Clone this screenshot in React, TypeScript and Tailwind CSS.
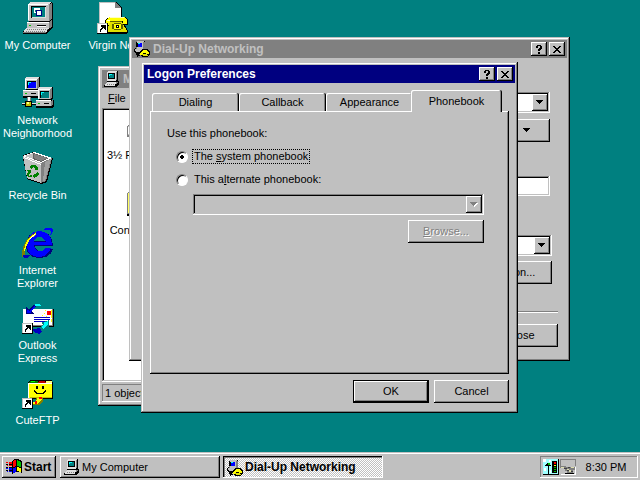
import React, { useState } from 'react';

const raisedWindow =
  'bg-[#c0c0c0] shadow-[inset_-1px_-1px_#000,inset_1px_1px_#c0c0c0,inset_-2px_-2px_#808080,inset_2px_2px_#fff]';
const raised = 'bg-[#c0c0c0] shadow-[inset_-1px_-1px_#000,inset_1px_1px_#fff,inset_-2px_-2px_#808080]';
const sunken = 'shadow-[inset_-1px_-1px_#fff,inset_1px_1px_#808080,inset_-2px_-2px_#c0c0c0,inset_2px_2px_#000]';
const thinSunken = 'shadow-[inset_-1px_-1px_#fff,inset_1px_1px_#808080]';
const boldFont = 'text-[12px] font-bold';

/* ---------- Icons ---------- */

type IconProps = { size?: 16 | 32; children: React.ReactNode };

const Pixels: React.FC<IconProps> = ({ size = 32, children }) => (
  <svg
    width={size}
    height={size}
    viewBox={`0 0 ${size} ${size}`}
    shapeRendering="crispEdges"
    className="shrink-0"
    aria-hidden="true"
  >
    {children}
  </svg>
);

const ShortcutArrow = () => (
  <>
    <path d="M0 21h11v11H0z" fill="#000" />
    <path d="M0 21h10v10H0z" fill="#c0c0c0" />
    <path d="M1 22h9v9H1z" fill="#fff" />
    <path d="M4 23h5v5h-1v-1h-1v-1h-1v1h-1v1h-1v2h-1v-3h1v-1h1v-1h-1v-1h-1z" fill="#000" />
  </>
);

const MyComputerIcon = () => (
  <Pixels>
    <path d="M8 0h22v1h1v17l-2 2H7l-1-1V2z" fill="#000" />
    <path d="M8 0h21v1l-3 1H6z" fill="#dfdfdf" />
    <path d="M27 2l3-1v16l-3 2z" fill="#808080" />
    <path d="M6 2h21v17H6z" fill="#c0c0c0" />
    <path d="M6 2h20v1H7v15H6z" fill="#fff" />
    <path d="M9 4h15v12H9z" fill="#000" />
    <path d="M10 5h14v11H10z" fill="#dfdfdf" />
    <path d="M10 5h13v10H10z" fill="#008080" />
    <path d="M12 6h6v5h-6z" fill="#fff" />
    <path d="M13 8h4v2h-4z" fill="#008080" />
    <path d="M14 8h6v6h-6z" fill="#000080" />
    <path d="M15 9h4v4h-4z" fill="#fff" />
    <path d="M5 20h23l3-2v7l-3 3H5z" fill="#000" />
    <path d="M5 20h22v7H5z" fill="#c0c0c0" />
    <path d="M5 20h22v1H5z" fill="#fff" />
    <path d="M27 20l3-2v6l-3 3z" fill="#808080" />
    <path d="M7 23h2v1H7z" fill="#00c000" />
    <path d="M15 23h9v1h-9z" fill="#000" />
    <path d="M15 24h9v1h-9z" fill="#fff" />
    <path d="M4 26h24v2l-3 4H1v-2z" fill="#000" />
    <path d="M4 26h23l-3 5H1z" fill="#dfdfdf" />
    <path
      d="M5 27h1m1 0h1m1 0h1m1 0h1m1 0h1m1 0h1m1 0h1m1 0h1m1 0h1m1 0h1m1 0h1M4 29h1m1 0h1m1 0h1m1 0h1m1 0h1m1 0h1m1 0h1m1 0h1m1 0h1m1 0h1"
      transform="translate(0 .5)"
      stroke="#808080"
    />
    <path d="M1 30h23v1H1z" fill="#808080" />
  </Pixels>
);

const Terminal = ({ x, y, screen }: { x: number; y: number; screen: string }) => (
  <g transform={`translate(${x} ${y})`}>
    <path d="M3 0h14v12l-2 1h2l1-1v7l-2 2H0v-8h3l-1-1V2z" fill="#000" />
    <path d="M3 0h13l-2 2H2z" fill="#dfdfdf" />
    <path d="M14 2l2-2v11l-2 1z" fill="#808080" />
    <path d="M2 2h12v10H2z" fill="#c0c0c0" />
    <path d="M2 2h12v1H3v9H2z" fill="#fff" />
    <path d="M4 4h9v7H4z" fill="#000" />
    <path d="M5 5h8v6H5z" fill={screen} />
    <path d="M5 5h3v1H6v2H5z" fill="#00ffff" />
    <path d="M0 13h15v6H0z" fill="#c0c0c0" />
    <path d="M0 13h15v1H0z" fill="#fff" />
    <path d="M15 14l2-2v5l-2 2z" fill="#808080" />
    <path d="M2 16h2v1H2z" fill="#00c000" />
    <path d="M8 16h5v1H8z" fill="#000" />
  </g>
);

const NetworkIcon = () => (
  <Pixels>
    <Terminal x={1} y={0} screen="#0000ff" />
    <path d="M5 20h4v5H5z" fill="#808080" />
    <path d="M6 20h2v5H6z" fill="#fff" />
    <path d="M0 26h4v1H0zM10 26h5v1h-5z" fill="#dfdfdf" />
    <path d="M0 27h15v1H0z" fill="#000" />
    <path d="M3 24h7v6H3z" fill="#000" />
    <path d="M4 25h5v4H4z" fill="#c0c000" />
    <path d="M5 25h2v2H5z" fill="#ffff80" />
    <Terminal x={14} y={10} screen="#008080" />
  </Pixels>
);

const RecycleIcon = () => (
  <Pixels>
    <path d="M1 3l11-3 19 6-6 24-6 2L5 27 1 6z" fill="#000" />
    <path d="M1 4l18 7v20L5 26z" fill="#c0c0c0" />
    <path d="M19 11l11-5-6 23-5 2z" fill="#808080" />
    <path d="M23 10l6-3-6 22h-2z" fill="#a0a0a0" />
    <path d="M1 4l11-4 18 6-11 5z" fill="#fff" />
    <path d="M3 4l8-3 16 5-8 4z" fill="#606060" />
    <path d="M11 1v6l8 3L3 4z" fill="#c0c0c0" />
    <path d="M12 2l14 4-7 3-7-3z" fill="#808080" />
    <path d="M2 5l17 7v1L2 6z" fill="#fff" />
    <path
      d="M9 13h4l2 2 1-1v4h-4l1-1-2-2-1 2-2-1zM5 18h4v4l-1-1-1 2 1 2H6l-1-3 1-2zM14 19l2 1 1 2-2 3h-2v1l-3-2 3-3v1h1l1-2zM8 23h2v2H8z"
      fill="#008000"
    />
  </Pixels>
);

const ExplorerIcon = () => (
  <Pixels>
    <path d="M22 2q7-3 9 1 0 2-2 5h-1q3-7-6-5z" fill="#0000ff" />
    <path d="M17 4c8 0 14 5 14 15H13c1 7 9 7 10 3h8c-2 7-8 9-14 9C8 31 4 25 4 18S9 4 17 4z" fill="#000080" />
    <path d="M17 4c8 0 13 5 13 14H12c1 8 10 8 11 3h6c-2 6-7 9-12 9C9 30 5 25 5 18S9 4 17 4z" fill="#0000ff" />
    <path d="M12 15c1-7 10-7 11 0z" fill="#008080" />
    <path d="M12 14h12v1H12z" fill="#000080" />
    <path d="M14 5C6 9 1 17 0 25v5h3v-4C2 18 8 10 14 6z" fill="#808000" />
    <path d="M14 6C7 9 2 16 2 24h1C4 17 8 11 14 8z" fill="#ffff00" />
    <path d="M7 12l4-4 2-1-5 6z" fill="#fff" />
    <path d="M2 27q1 3 7 0v1q-5 5-8 2z" fill="#0000c0" />
  </Pixels>
);

const OutlookIcon = () => (
  <Pixels>
    <path d="M1 7h31v18H1z" fill="#000" />
    <path d="M1 7h30v17H1z" fill="#808080" />
    <path d="M1 7h29v16H1z" fill="#fff" />
    <path d="M23 8h1v1h-1zM22 11h1v1h-1zM24 14h1v1h-1zM20 13h1v1h-1zM27 15h1v1h-1zM29 17h1v3h-1zM29 8h1v8h-1z" fill="#ffff00" />
    <path d="M25 9h4v4h-4z" fill="#ff0000" />
    <path d="M12 15h16v1H12zM12 17h16v1H12zM12 19h14v1H12z" fill="#0000c0" />
    <path d="M12 2q3-2 6-1l3 3v1l-2-1q-3 0-5 2h-3z" fill="#008080" />
    <path d="M13 2h4l2 2h-4l-3 1z" fill="#00ffff" />
    <path d="M4 5l3 2 5-5 2 3-5 4 3 3H4z" fill="#000080" />
    <path d="M5 8l3 1 4-5 1 1-4 5v1H5z" fill="#0000ff" />
    <path d="M19 21l8-3v8l-2-1q-3 4-6 4l-1-4 3-2z" fill="#008080" />
    <path d="M21 21l5-2v5l-1-1-4 4-1-3 2-2z" fill="#00ffff" />
    <path d="M11 27l7-1 2 4-3 2-5-2z" fill="#0000c0" />
    <ShortcutArrow />
  </Pixels>
);

const CuteFtpIcon = () => (
  <Pixels>
    <path d="M8 3h22v2h1v17H6V6z" fill="#000" />
    <path d="M8 4h7l2 2H7z" fill="#008000" />
    <path d="M9 4h4v1H9z" fill="#00ff00" />
    <path d="M17 4h6l1 2h-8z" fill="#c00000" />
    <path d="M24 4h6v2h-6z" fill="#ffff80" />
    <path d="M6 6h24v15H6z" fill="#ffff00" />
    <path d="M6 6h24v1H7v14H6z" fill="#fff" />
    <path d="M8 20h22v1H8z" fill="#c0c000" />
    <path
      d="M14 9h2v3h-2zM20 9h2v3h-2zM12 13h1v1h1v1h1v1h6v-1h1v-1h1v-1h1v2h-1v1h-1v1h-8v-1h-1v-1h-1z"
      fill="#000"
    />
    <path d="M14 21h7v3l-4 4h-6v-3h3z" fill="#808000" />
    <path d="M15 21h5v1l-4 5h-5v-2h3z" fill="#ffff00" />
    <path d="M13 24h2v3h-2zM17 20h3v2h-3z" fill="#ff0000" />
    <ShortcutArrow />
  </Pixels>
);

const Phone = () => (
  <>
    <path d="M13 15h15l3 3v5h-3l3 6v2l-2 1H10l-2-2 2-6H8v-6z" fill="#000" />
    <path d="M13 15h14l3 3v4h-4v-3h-11v4H9v-5z" fill="#ffff00" />
    <path d="M13 20h12l5 9v1H10v-2z" fill="#e0e000" />
    <path d="M13 15h14v1H13zM10 18h3v1h-3z" fill="#ffffc0" />
    <path d="M13 19h12v1H13zM17 21h7v1h2v5h-2v1h-7v-1h-2v-5h2z" fill="#606000" />
    <path d="M17 22h7v5h-7z" fill="#ffff00" />
    <path d="M19 23h3v3h-3z" fill="#000" />
    <path d="M20 24h1v1h-1z" fill="#fff" />
  </>
);

const VirginIcon = () => (
  <Pixels>
    <path d="M2 0h17l6 6v25H2z" fill="#000" />
    <path d="M2 0h16l6 6v24H2z" fill="#fff" />
    <path d="M2 0h16v1H3v29H2z" fill="#c0c0c0" />
    <path d="M18 0v6h6z" fill="#808080" />
    <Phone />
    <ShortcutArrow />
  </Pixels>
);

const FloppyIcon = () => (
  <Pixels>
    <path d="M0 14l4-4h27v12l-3 3H0z" fill="#808080" />
    <path d="M1 14l4-3h23l-3 3v9H1z" fill="#c0c0c0" />
    <path d="M2 14l3-2h22l-3 2z" fill="#fff" />
    <path d="M1 15h1v7H1z" fill="#fff" />
    <path d="M4 18h19v2H4z" fill="#000" />
  </Pixels>
);

const FolderIcon = () => (
  <Pixels>
    <path d="M0 6l3-3h10l3 3h13v22H0z" fill="#808080" />
    <path d="M1 6l3-2h9l3 3h12v19H1z" fill="#ffff60" />
    <path d="M0 27h30v2H0z" fill="#000" />
  </Pixels>
);

const SmallComputerIcon = () => (
  <Pixels size={16}>
    <path d="M4 0h10v9l-1 1h2v3l-3 3H0v-2l3-3V1z" fill="#000" />
    <path d="M4 0h9v1H4zM3 1h9v9H3z" fill="#dfdfdf" />
    <path d="M12 1h1v8h-1z" fill="#808080" />
    <path d="M4 2h7v6H4z" fill="#000" />
    <path d="M5 3h5v4H5z" fill="#008080" />
    <path d="M5 3h3v1H6v1H5z" fill="#00ffff" />
    <path d="M3 11h10v1H3zM2 12h10v1H2zM1 13h10v2H1z" fill="#dfdfdf" />
    <path d="M12 11h2v1h-1v1h-1zM3 13h1v1H3zM5 13h1v1H5zM7 13h1v1H7zM9 13h1v1H9z" fill="#808080" />
  </Pixels>
);

const SmallDialUpIcon = () => (
  <Pixels size={16}>
    <path d="M2 1l1-1h7l1 1v8l-1 1 1 2v1H3l-3-2V8l2-1z" fill="#000" />
    <path d="M3 0h7v8H3zM1 8h9v3H2z" fill="#c0c0c0" />
    <path d="M9 1h2v9H9zM2 6h1v2H2z" fill="#808080" />
    <path d="M3 2h5v4H3z" fill="#000" />
    <path d="M4 2h4v4H4z" fill="#0000ff" />
    <path d="M4 2h2v1H4z" fill="#00ffff" />
    <path d="M3 12h3v1H5v1h1v1H4v1H3v-2H2v-1h1z" fill="#000" />
    <path d="M8 8h5l3 3v2l-3 3H8l-3-3v-2z" fill="#000" />
    <path d="M9 9h3l3 3-1 1h-2v-1H9v2H6v-2z" fill="#ffff00" />
    <path d="M8 13h4l2 1-1 1H9z" fill="#e0e000" />
  </Pixels>
);

const StartFlag = () => (
  <Pixels size={16}>
    <path d="M6 2l3-2h3l4 2v12l-3-1h-3l-4 2z" fill="#000" />
    <path d="M7 2l2-1h1v6l-3 1z" fill="#ff0000" />
    <path d="M11 1l4 2v5l-4-1z" fill="#00c000" />
    <path d="M7 9l3-1v5l-3 1z" fill="#0000ff" />
    <path d="M11 8l4 1v4l-4-1z" fill="#ffff00" />
    <path d="M0 3h2v1H0zM3 3h3v2H3zM1 6h1v1H1zM3 6h3v1H3z" fill="#ff0000" />
    <path d="M0 9h2v1H0zM3 9h3v2H3zM1 12h1v1H1zM3 12h3v1H3z" fill="#0000ff" />
    <path d="M0 5h2v1H0zM3 5h3v1H3zM0 8h2v1H0zM3 8h3v1H3zM0 11h2v1H0zM3 11h3v1H3z" fill="#000" />
  </Pixels>
);

const TrayMonitorIcon = () => (
  <Pixels size={16}>
    <path d="M0 0h16v16H0z" fill="#a0ffff" />
    <path d="M0 0h3v3H0zM6 1h2v2H6zM1 9h2v3H1zM7 11h1v3H7z" fill="#fff" />
    <path d="M15 0h1v16H0v-1h15z" fill="#000" />
    <path d="M3 6l2-2h2v3H3z" fill="#ffff00" />
    <path d="M2 6h1V5h1V4h2v1H5v1h3v1H6v8H5V7H2z" fill="#000" />
    <path d="M5 4h2v2H5z" fill="#00c000" />
    <path d="M9 2h5v12H9z" fill="#000" />
    <path d="M11 3h2v2h-2z" fill="#ff0000" />
    <path d="M11 6h2v1h-2z" fill="#ffff00" />
    <path d="M11 8h2v1h-2zM11 10h2v1h-2zM11 12h2v1h-2z" fill="#00c000" />
  </Pixels>
);

const TrayPhoneIcon = () => (
  <Pixels size={16}>
    <path d="M0 0h16v1H1v6H0zM15 1h1v6h-1z" fill="#808080" />
    <path d="M0 7h6v1h9v3h-2v3H7v-2H5v-3H0z" fill="#808080" />
    <path d="M4 9h3v1H4zM8 8h2v1H8zM7 11h2v1H7zM11 12h2v1h-2z" fill="#404040" />
    <path d="M1 8h3v1H1zM7 10h2v1H7zM11 8h3v1h-3zM9 11h2v2H9z" fill="#dfdfb0" />
    <path d="M5 14h9v1H5z" fill="#000" />
    <path d="M1 15h15v1H1zM15 8h1v7h-1z" fill="#fff" />
  </Pixels>
);

const DownArrow = ({ disabled = false }: { disabled?: boolean }) => (
  <svg width="8" height="5" viewBox="0 0 8 5" shapeRendering="crispEdges" aria-hidden="true">
    {disabled && <path d="M1 1h7v1H7v1H6v1H5v1H4V4H3V3H2V2H1z" fill="#fff" />}
    <path d="M0 0h7v1H6v1H5v1H4v1H3V3H2V2H1V1H0z" fill={disabled ? '#808080' : '#000'} />
  </svg>
);

/* ---------- Controls ---------- */

const PushButton: React.FC<React.ButtonHTMLAttributes<HTMLButtonElement>> = ({ className = '', children, ...rest }) => (
  <button type="button" className={`flex h-[23px] items-center justify-center ${raised} ${className}`} {...rest}>
    {children}
  </button>
);

type ComboProps = { label: string; disabled?: boolean; className?: string };

const Combo: React.FC<ComboProps> = ({ label, disabled = false, className = '' }) => (
  <div className={`relative h-[21px] ${sunken} ${disabled ? 'bg-[#c0c0c0]' : 'bg-white'} ${className}`}>
    <select aria-label={label} disabled={disabled} className="h-full w-full appearance-none bg-transparent pl-1" />
    <span
      className={`pointer-events-none absolute top-[2px] right-[2px] bottom-[2px] flex w-4 items-center justify-center ${raised}`}
    >
      <DownArrow disabled={disabled} />
    </span>
  </div>
);

type TitleBarProps = { title: string; active?: boolean; icon?: React.ReactNode; controls?: boolean };

const TitleBar: React.FC<TitleBarProps> = ({ title, active = false, icon, controls = true }) => (
  <div
    className={`flex h-[18px] items-center gap-[2px] px-[2px] ${boldFont} ${
      active ? 'bg-[#000080] text-white' : 'bg-[#808080] text-[#c0c0c0]'
    }`}
  >
    {icon}
    <h2 className="flex-1 px-px whitespace-nowrap">{title}</h2>
    {controls && (
      <>
        <button type="button" aria-label="Help" className={`flex h-[14px] w-4 items-center justify-center ${raised}`}>
          <svg width="6" height="9" viewBox="0 0 6 9" shapeRendering="crispEdges">
            <path d="M1 0h4v1h1v3H5v1H4v1H2V4h1V3h1V1H2v2H0V1h1zM2 7h2v2H2z" fill="#000" />
          </svg>
        </button>
        <button type="button" aria-label="Close" className={`flex h-[14px] w-4 items-center justify-center ${raised}`}>
          <svg width="8" height="7" viewBox="0 0 8 7" shapeRendering="crispEdges">
            <path
              d="M0 0h2v1h1v1h2V1h1V0h2v1H7v1H6v1H5v1h1v1h1v1h1v1H6V6H5V5H3v1H2v1H0V6h1V5h1V4h1V3H2V2H1V1H0z"
              fill="#000"
            />
          </svg>
        </button>
      </>
    )}
  </div>
);

/* ---------- Desktop ---------- */

const desktopColumns = [
  [
    { label: 'My Computer', icon: <MyComputerIcon /> },
    { label: 'Network Neighborhood', icon: <NetworkIcon /> },
    { label: 'Recycle Bin', icon: <RecycleIcon /> },
    { label: 'Internet Explorer', icon: <ExplorerIcon /> },
    { label: 'Outlook Express', icon: <OutlookIcon /> },
    { label: 'CuteFTP', icon: <CuteFtpIcon /> },
  ],
  [{ label: 'Virgin Net', icon: <VirginIcon /> }],
];

const Desktop = () => (
  <div className="flex text-white">
    {desktopColumns.map((column, i) => (
      <div key={i} className="flex w-[75px] flex-col">
        {column.map((item) => (
          <button key={item.label} type="button" className="flex h-[75px] flex-col items-center gap-[5px] pt-[2px]">
            {item.icon}
            <span className="w-[72px] text-center">{item.label}</span>
          </button>
        ))}
      </div>
    ))}
  </div>
);

const MyComputerWindow = () => (
  <section className={`absolute top-[66px] left-[98px] w-[300px] p-1 ${raisedWindow}`}>
    <TitleBar title="My" icon={<SmallComputerIcon />} controls={false} />
    <nav className="flex h-5 items-center px-[6px]">
      <button type="button">
        <u>F</u>ile
      </button>
    </nav>
    <div className={`flex h-[274px] flex-col bg-white px-[2px] pt-1 ${sunken}`}>
      <div className="flex h-[75px] w-[78px] flex-col items-center gap-[5px] whitespace-nowrap">
        <FloppyIcon />
        <span>3½ Floppy (A:)</span>
      </div>
      <div className="flex h-[75px] w-[78px] flex-col items-center gap-[5px] whitespace-nowrap">
        <FolderIcon />
        <span>Control Panel</span>
      </div>
    </div>
    <div className={`mt-[2px] flex h-[18px] items-center px-[3px] ${thinSunken}`}>1 object(s)</div>
  </section>
);

const DialUpWindow = () => (
  <section className={`absolute top-[37px] left-[129px] w-[441px] p-[3px] ${raisedWindow}`}>
    <TitleBar title="Dial-Up Networking" icon={<SmallDialUpIcon />} />
    <div className="flex flex-col items-end pt-[34px] pr-[17px]">
      <Combo label="Phonebook entry to dial" className="w-[280px]" />
      <PushButton aria-label="More" className="mt-[6px] w-[46px]">
        <DownArrow />
      </PushButton>
      <input aria-label="Phone number" className={`mt-[34px] h-5 w-[280px] bg-white px-1 ${sunken}`} />
    </div>
    <div className="flex flex-col items-end pt-[39px] pr-[15px]">
      <Combo label="Dialing from" className="w-[280px]" />
      <PushButton className="mt-[5px] w-[84px]">Location...</PushButton>
    </div>
    <div className="flex flex-col items-end px-[9px] pt-[27px] pb-[11px]">
      <hr className="w-full border-t border-b border-t-[#808080] border-b-white" />
      <PushButton className="mt-[11px] w-[75px]">Close</PushButton>
    </div>
  </section>
);

const tabs = ['Dialing', 'Callback', 'Appearance', 'Phonebook'];

const radioClass =
  'size-3 shrink-0 appearance-none rounded-full border border-[#808080] border-r-white border-b-white bg-white shadow-[inset_1px_1px_#000] checked:bg-[radial-gradient(circle,#000_2px,#fff_2px)]';

const LogonPreferences = () => {
  const [activeTab, setActiveTab] = useState('Phonebook');
  const [source, setSource] = useState('system');

  return (
    <section className={`absolute top-[62px] left-[141px] w-[377px] p-[3px] ${raisedWindow}`}>
      <TitleBar title="Logon Preferences" active />
      <div className="px-[6px] pt-[7px] pb-[7px]">
        {/* Tabs */}
        <div role="tablist" className="flex items-end px-[2px]">
          {tabs.map((tab) =>
            tab === activeTab ? (
              <button
                key={tab}
                type="button"
                role="tab"
                aria-selected="true"
                className="relative -mb-px -ml-[2px] h-[22px] w-[91px] rounded-t-[2px] bg-[#c0c0c0] shadow-[inset_-1px_0_#000,inset_1px_1px_#fff,inset_-2px_0_#808080]"
              >
                {tab}
              </button>
            ) : (
              <button
                key={tab}
                type="button"
                role="tab"
                aria-selected="false"
                onClick={() => setActiveTab(tab)}
                className="h-[18px] w-[87px] rounded-t-[2px] pt-px shadow-[inset_-1px_0_#000,inset_1px_1px_#fff,inset_-2px_0_#808080]"
              >
                {tab}
              </button>
            )
          )}
        </div>

        {/* Tab page */}
        <div role="tabpanel" className={`h-[263px] px-[17px] pt-4 ${raised}`}>
          <p>Use this phonebook:</p>
          <div className="mt-[9px] flex flex-col gap-2 pl-[9px]">
            <div className="flex items-center gap-1">
              <input
                id="system"
                type="radio"
                name="source"
                className={radioClass}
                checked={source === 'system'}
                onChange={() => setSource('system')}
              />
              <label htmlFor="system" className="border border-dotted border-black px-px">
                The <u>s</u>ystem phonebook
              </label>
            </div>
            <div className="flex items-center gap-1">
              <input
                id="alternate"
                type="radio"
                name="source"
                className={radioClass}
                checked={source === 'alternate'}
                onChange={() => setSource('alternate')}
              />
              <label htmlFor="alternate" className="border border-transparent px-px">
                This a<u>l</u>ternate phonebook:
              </label>
            </div>
          </div>
          <div className="mt-[7px] flex flex-col items-end gap-[5px] pr-2 pl-[26px]">
            <Combo label="Alternate phonebook" disabled className="w-full" />
            <PushButton disabled className="w-[76px] text-[#808080] [text-shadow:1px_1px_#fff]">
              <span>
                <u>B</u>rowse...
              </span>
            </PushButton>
          </div>
        </div>

        <div className="mt-[6px] flex justify-end gap-[5px]">
          <PushButton className="w-[76px] border border-black">OK</PushButton>
          <PushButton className="w-[75px]">Cancel</PushButton>
        </div>
      </div>
    </section>
  );
};

const Taskbar = () => (
  <footer className="flex h-7 items-center bg-[#c0c0c0] px-[2px] pt-[2px] shadow-[inset_0_1px_#c0c0c0,inset_0_2px_#fff]">
    <button type="button" className={`flex h-[22px] w-[54px] items-center gap-[2px] px-1 ${boldFont} ${raised}`}>
      <StartFlag />
      Start
    </button>
    <button type="button" className={`ml-1 flex h-[22px] w-40 items-center gap-[2px] px-1 ${raised}`}>
      <SmallComputerIcon />
      My Computer
    </button>
    <button
      type="button"
      className={`ml-[3px] flex h-[22px] w-40 items-center gap-[2px] bg-[#c0c0c0] bg-[conic-gradient(#fff_25%,#c0c0c0_0_50%,#fff_0_75%,#c0c0c0_0)] bg-size-[2px_2px] px-1 pt-px ${boldFont} shadow-[inset_-1px_-1px_#fff,inset_1px_1px_#000,inset_2px_2px_#808080]`}
    >
      <SmallDialUpIcon />
      Dial-Up Networking
    </button>
    <div className={`ml-auto flex h-[22px] w-[98px] items-center gap-px px-[3px] ${thinSunken}`}>
      <TrayMonitorIcon />
      <TrayPhoneIcon />
      <time className="flex-1 text-center">8:30 PM</time>
    </div>
  </footer>
);

export default function App() {
  return (
    <div className='relative flex h-screen flex-col overflow-hidden bg-[#008080] font-["Liberation_Sans",Arial,sans-serif] text-[11px] leading-[13px] text-black'>
      <main className="flex-1">
        <Desktop />
        <MyComputerWindow />
        <DialUpWindow />
        <LogonPreferences />
      </main>
      <Taskbar />
    </div>
  );
}
